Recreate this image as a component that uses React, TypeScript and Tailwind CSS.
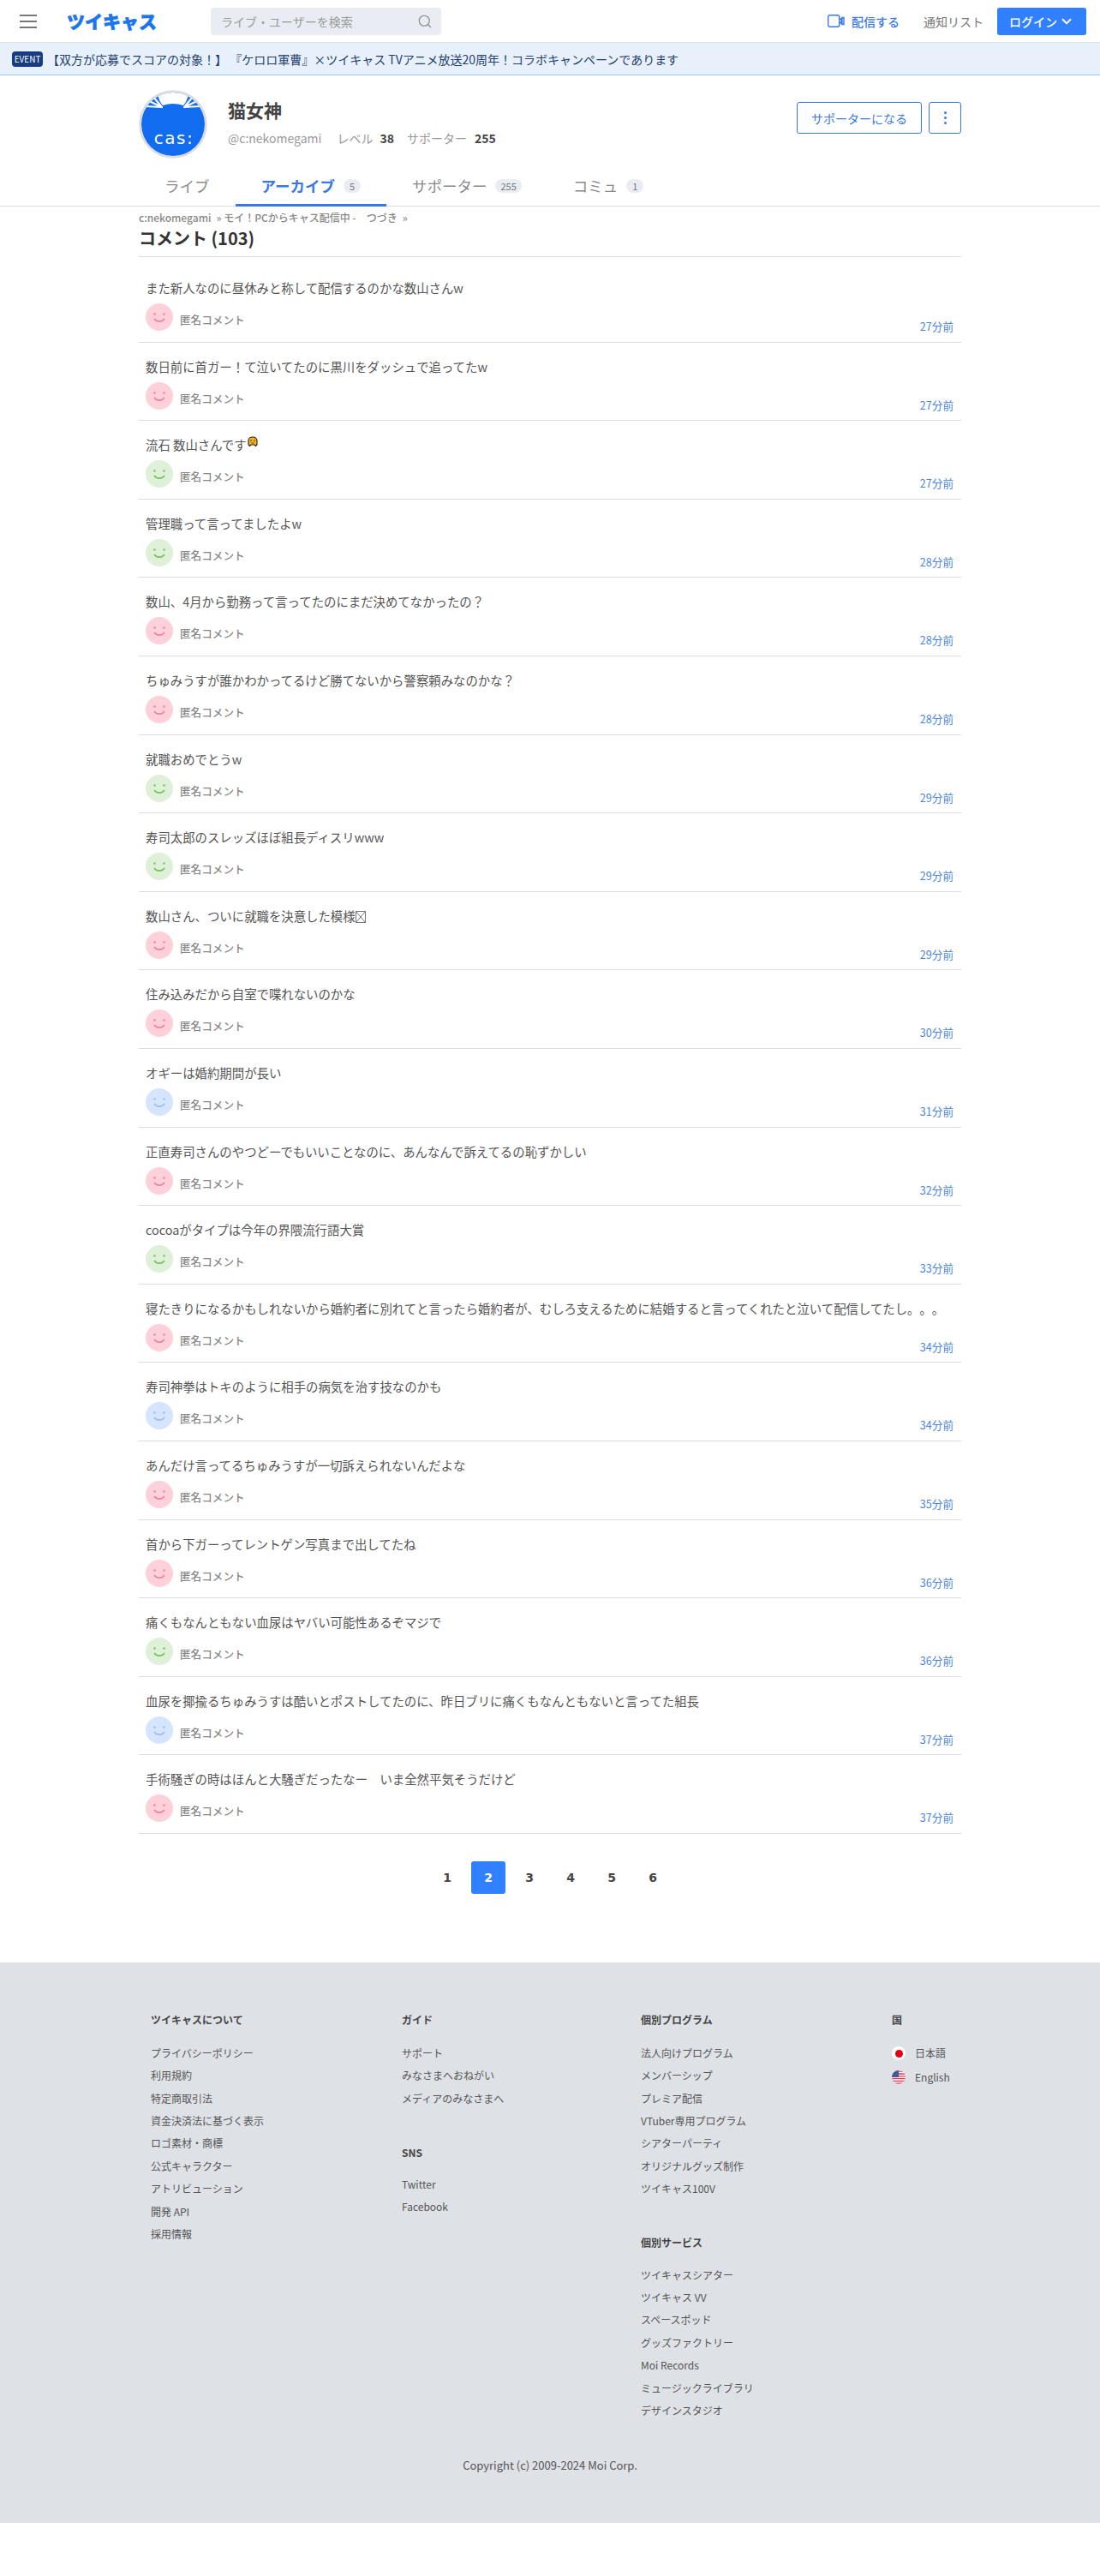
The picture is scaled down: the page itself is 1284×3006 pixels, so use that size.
import { ChevronDown, Search } from "lucide-react";

type Tone = "pink" | "green" | "blue";

const comments: { text: string; tone: Tone; time: string; extra?: "emoji" | "tofu" }[] = [
  { text: "また新人なのに昼休みと称して配信するのかな数山さんw", tone: "pink", time: "27分前" },
  { text: "数日前に首ガー！て泣いてたのに黒川をダッシュで追ってたw", tone: "pink", time: "27分前" },
  { text: "流石 数山さんです", tone: "green", time: "27分前", extra: "emoji" },
  { text: "管理職って言ってましたよw", tone: "green", time: "28分前" },
  { text: "数山、4月から勤務って言ってたのにまだ決めてなかったの？", tone: "pink", time: "28分前" },
  { text: "ちゅみうすが誰かわかってるけど勝てないから警察頼みなのかな？", tone: "pink", time: "28分前" },
  { text: "就職おめでとうw", tone: "green", time: "29分前" },
  { text: "寿司太郎のスレッズほぼ組長ディスリwww", tone: "green", time: "29分前" },
  { text: "数山さん、ついに就職を決意した模様", tone: "pink", time: "29分前", extra: "tofu" },
  { text: "住み込みだから自室で喋れないのかな", tone: "pink", time: "30分前" },
  { text: "オギーは婚約期間が長い", tone: "blue", time: "31分前" },
  { text: "正直寿司さんのやつどーでもいいことなのに、あんなんで訴えてるの恥ずかしい", tone: "pink", time: "32分前" },
  { text: "cocoaがタイプは今年の界隈流行語大賞", tone: "green", time: "33分前" },
  { text: "寝たきりになるかもしれないから婚約者に別れてと言ったら婚約者が、むしろ支えるために結婚すると言ってくれたと泣いて配信してたし。。。", tone: "pink", time: "34分前" },
  { text: "寿司神拳はトキのように相手の病気を治す技なのかも", tone: "blue", time: "34分前" },
  { text: "あんだけ言ってるちゅみうすが一切訴えられないんだよな", tone: "pink", time: "35分前" },
  { text: "首から下ガーってレントゲン写真まで出してたね", tone: "pink", time: "36分前" },
  { text: "痛くもなんともない血尿はヤバい可能性あるぞマジで", tone: "green", time: "36分前" },
  { text: "血尿を揶揄るちゅみうすは酷いとポストしてたのに、昨日ブリに痛くもなんともないと言ってた組長", tone: "blue", time: "37分前" },
  { text: "手術騒ぎの時はほんと大騒ぎだったなー　いま全然平気そうだけど", tone: "pink", time: "37分前" },
];

const toneColors: Record<Tone, { bg: string; fg: string }> = {
  pink: { bg: "#fdd0da", fg: "#f0829b" },
  green: { bg: "#dff0d8", fg: "#74c25e" },
  blue: { bg: "#d5e5fd", fg: "#9dbcf0" },
};

const FooterTitle = ({ children, className = "" }: { children: string; className?: string }) => (
  <p className={`h-5 text-xs leading-5 font-bold text-[#444] ${className}`}>{children}</p>
);

const FooterLinks = ({ items }: { items: string[] }) => (
  <ul>
    {items.map((item) => (
      <li key={item} className="h-[26.4px] text-xs leading-[26.4px] text-[#555] whitespace-nowrap">
        {item}
      </li>
    ))}
  </ul>
);

const Smiley = ({ tone }: { tone: Tone }) => {
  const c = toneColors[tone];
  return (
    <svg width="32" height="32" viewBox="0 0 32 32" className="shrink-0">
      <circle cx="16" cy="16" r="16" fill={c.bg} />
      <circle cx="10.5" cy="12.5" r="1.2" fill={c.fg} />
      <circle cx="21.5" cy="12.5" r="1.2" fill={c.fg} />
      <path d="M10.5 18.5c2.5 3.6 8.5 3.6 11 0" fill="none" stroke={c.fg} strokeWidth="1.7" strokeLinecap="round" />
    </svg>
  );
};

const Emoji = () => (
  <svg width="14" height="13" viewBox="0 0 14 13" className="inline-block align-[3px]">
    <path d="M2 10V5C2 2.5 4 1 7 1s5 1.5 5 4v5l-1.5 1.5L9 10H5l-1.5 1.5z" fill="#f0b51e" stroke="#222" strokeWidth="1.1" />
    <rect x="4.5" y="4.5" width="1.2" height="1.2" fill="#222" />
    <rect x="8.5" y="4.5" width="1.2" height="1.2" fill="#222" />
    <rect x="5.5" y="7.5" width="3" height="1" fill="#a33" />
  </svg>
);

const Tofu = () => (
  <svg width="12" height="14" viewBox="0 0 12 14" className="inline-block align-[-2px]">
    <path d="M.5.5h11v13H.5zM.5.5l11 13M11.5.5l-11 13" fill="none" stroke="#555" strokeWidth=".8" />
  </svg>
);

const CasAvatar = () => (
  <svg width="80" height="80" viewBox="0 0 80 80" className="shrink-0">
    <defs>
      <clipPath id="cas-clip">
        <circle cx="40" cy="40" r="37" />
      </clipPath>
    </defs>
    <circle cx="40" cy="40" r="38.5" fill="#fff" stroke="#dcdcdc" strokeWidth="2.5" />
    <g clipPath="url(#cas-clip)">
      <rect width="80" height="80" fill="#116cf0" />
      <path d="M21 0q2 13 7 18q12-4 24 0q5-5 7-18z" fill="#fff" />
      <g fill="none" stroke="#fff" strokeWidth="2.2" strokeLinecap="round">
        <path d="M8 19l19 1M10 12l17 8M17 8l10 12" />
        <path d="M72 19l-19 1M70 12l-17 8M63 8l-10 12" />
      </g>
    </g>
    <text x="41" y="63" textAnchor="middle" fill="#fff" fontSize="20" letterSpacing="1.5" fontFamily="'DejaVu Sans', sans-serif">
      cas:
    </text>
  </svg>
);

const UsFlag = () => (
  <svg width="16" height="16" viewBox="0 0 16 16" className="shrink-0">
    <defs>
      <clipPath id="us-clip">
        <circle cx="8" cy="8" r="8" />
      </clipPath>
    </defs>
    <g clipPath="url(#us-clip)">
      <rect width="16" height="16" fill="#fff" />
      <path d="M0 1.2h16M0 4h16M0 6.8h16M0 9.6h16M0 12.4h16M0 15.2h16" stroke="#e8344f" strokeWidth="1.3" />
      <rect width="8" height="8" fill="#3c5a99" />
    </g>
  </svg>
);

const Tab = ({ label, count, active }: { label: string; count?: string; active?: boolean }) => (
  <div
    className={`flex h-[50px] items-center gap-[10px] px-[30px] pt-[5px] text-[17.5px] ${
      active ? "border-b-[3px] border-[#3a78e6] font-bold text-[#3a78e6]" : "pb-[3px] text-[#8a8a8a]"
    }`}
  >
    <span>{label}</span>
    {count && (
      <span className="flex h-4 min-w-5 items-center justify-center rounded-full bg-[#e9edf3] px-[6px] text-[11px] font-normal text-[#777]">
        {count}
      </span>
    )}
  </div>
);

const App = () => {
  return (
    <div className="min-h-[3006px] bg-white font-['Noto_Sans_CJK_JP','Noto_Sans',sans-serif] text-[#444] [text-spacing-trim:space-all]">
      <header className="flex h-[50px] items-center border-b border-[#dde1e6] pl-[23px] pr-4">
        <div className="flex w-5 flex-col gap-[5px]">
          <span className="h-[2px] bg-[#777]"></span>
          <span className="h-[2px] bg-[#777]"></span>
          <span className="h-[2px] bg-[#777]"></span>
        </div>
        <div className="ml-[35px] w-[105px] whitespace-nowrap text-[21px] leading-none font-black text-[#1b76ee] [-webkit-text-stroke:0.6px_#1b76ee]">ツイキャス</div>
        <div className="ml-[63px] flex h-8 w-[269px] items-center justify-between rounded bg-[#e9edf3] pl-3 pr-[10px]">
          <span className="text-sm text-[#9a9a9a]">ライブ・ユーザーを検索</span>
          <Search size={18} strokeWidth={1.5} className="text-[#888]" />
        </div>
        <div className="ml-auto flex items-center">
          <svg width="20" height="15" viewBox="0 0 20 15" fill="none" stroke="#3a78e6" strokeWidth="1.4">
            <rect x=".7" y=".7" width="13" height="13.6" rx="2" />
            <path d="M14 6l2-1.5v6l-2-1.5M17 3.5h2v8h-2z" />
          </svg>
          <span className="ml-2 text-sm font-medium text-[#3a78e6]">配信する</span>
          <span className="ml-7 text-sm text-[#777]">通知リスト</span>
          <div className="ml-4 flex h-8 w-[104px] items-center justify-center gap-[2px] rounded-[3px] bg-[#3080ff] text-sm font-medium text-white">
            ログイン
            <ChevronDown size={18} strokeWidth={2.5} />
          </div>
        </div>
      </header>

      <div className="flex h-[38px] items-center border-b border-[#a7c4e2] bg-[#e8f1fb] pl-[14px]">
        <span className="flex h-[18px] w-9 items-center justify-center rounded-sm bg-[#173d80] text-[10px] text-white">EVENT</span>
        <span className="ml-[5px] whitespace-nowrap text-sm text-[#1f3f6e]">
          【双方が応募でスコアの対象！】 『ケロロ軍曹』×ツイキャス TVアニメ放送20周年！コラボキャンペーンであります
        </span>
      </div>

      <div className="mx-auto w-[960px]">
        <div className="flex h-[103px] items-start pt-[17px]">
          <CasAvatar />
          <div className="ml-6 pt-[8px]">
            <h1 className="text-[21px] leading-[30px] font-bold text-[#444]">猫女神</h1>
            <div className="mt-2 flex items-center text-sm leading-5 text-[#999]">
              <span>@c:nekomegami</span>
              <span className="ml-[18px]">レベル</span>
              <b className="ml-2 text-[#444]">38</b>
              <span className="ml-[15px]">サポーター</span>
              <b className="ml-[9px] text-[#444]">255</b>
            </div>
          </div>
          <div className="ml-auto mt-[14px] flex gap-2">
            <div className="flex h-[37px] w-[146px] items-center justify-center rounded-[3px] border border-[#3a78e6] text-sm text-[#3a78e6]">
              サポーターになる
            </div>
            <div className="flex h-[37px] w-[38px] flex-col items-center justify-center gap-[3px] rounded-[3px] border border-[#3a78e6]">
              <span className="size-[3px] rounded-full bg-[#3a78e6]"></span>
              <span className="size-[3px] rounded-full bg-[#3a78e6]"></span>
              <span className="size-[3px] rounded-full bg-[#3a78e6]"></span>
            </div>
          </div>
        </div>
      </div>

      <div className="border-b border-[#ddd]">
        <div className="mx-auto -mb-px flex w-[960px]">
          <Tab label="ライブ" />
          <Tab label="アーカイブ" count="5" active />
          <Tab label="サポーター" count="255" />
          <Tab label="コミュ" count="1" />
        </div>
      </div>

      <main className="mx-auto w-[960px]">
        <p className="mt-[3px] text-xs leading-5 font-medium text-[#888]">
          c:nekomegami<span className="ml-[6px]">»</span> モイ！PCからキャス配信中 -　つづき<span className="ml-[6px]">»</span>
        </p>
        <h2 className="h-[35px] text-xl leading-[28px] font-bold text-[#333]">コメント (103)</h2>
        <div className="border-t border-[#ddd] pt-2">
          {comments.map((c, i) => (
            <div key={i} className="box-border flex h-[91.6px] flex-col border-b border-[#ddd] pl-2 pr-[9px] pt-[17px]">
              <p className="h-[22px] whitespace-nowrap text-[14.4px] leading-[22px] text-[#555]">
                {c.text}
                {c.extra === "emoji" && <Emoji />}
                {c.extra === "tofu" && <Tofu />}
              </p>
              <div className="mt-[7px] flex items-start">
                <Smiley tone={c.tone} />
                <span className="ml-2 mt-[9px] text-[12.6px] leading-5 font-medium text-[#888]">匿名コメント</span>
                <span className="ml-auto mt-[17px] text-[12.6px] leading-5 text-[#4a86e0]">{c.time}</span>
              </div>
            </div>
          ))}
        </div>
        <div className="mt-8 flex justify-center gap-2 font-['DejaVu_Sans',sans-serif] text-sm font-bold text-[#444]">
          {["1", "2", "3", "4", "5", "6"].map((n) => (
            <div key={n} className={`flex h-[38px] w-10 items-center justify-center rounded-[3px] ${n === "2" ? "bg-[#3080ff] text-white" : ""}`}>
              {n}
            </div>
          ))}
        </div>
      </main>

      <footer className="mt-20 h-[654px] bg-[#dee1e6] pt-[57px]">
        <div className="ml-[176px] flex">
          <div className="w-[293px]">
            <FooterTitle className="mb-4">ツイキャスについて</FooterTitle>
            <FooterLinks items={["プライバシーポリシー", "利用規約", "特定商取引法", "資金決済法に基づく表示", "ロゴ素材・商標", "公式キャラクター", "アトリビューション", "開発 API", "採用情報"]} />
          </div>
          <div className="w-[279px]">
            <FooterTitle className="mb-4">ガイド</FooterTitle>
            <FooterLinks items={["サポート", "みなさまへおねがい", "メディアのみなさまへ"]} />
            <FooterTitle className="mb-[14px] mt-10">SNS</FooterTitle>
            <FooterLinks items={["Twitter", "Facebook"]} />
          </div>
          <div className="w-[293px]">
            <FooterTitle className="mb-4">個別プログラム</FooterTitle>
            <FooterLinks items={["法人向けプログラム", "メンバーシップ", "プレミア配信", "VTuber専用プログラム", "シアターパーティ", "オリジナルグッズ制作", "ツイキャス100V"]} />
            <FooterTitle className="mb-[15px] mt-[39px]">個別サービス</FooterTitle>
            <FooterLinks items={["ツイキャスシアター", "ツイキャス VV", "スペースポッド", "グッズファクトリー", "Moi Records", "ミュージックライブラリ", "デザインスタジオ"]} />
          </div>
          <div>
            <FooterTitle className="mb-4">国</FooterTitle>
            <div className="flex h-[26.4px] items-center gap-[11px] text-xs text-[#555]">
              <span className="flex size-4 items-center justify-center rounded-full bg-white">
                <span className="size-[9px] rounded-full bg-[#e60012]"></span>
              </span>
              日本語
            </div>
            <div className="mt-[2px] flex h-[26.4px] items-center gap-[11px] text-xs text-[#555]">
              <UsFlag />
              English
            </div>
          </div>
        </div>
        <p className="mt-[41px] text-center text-[13px] leading-5 text-[#555]">Copyright (c) 2009-2024 Moi Corp.</p>
      </footer>
    </div>
  );
};

export default App;
